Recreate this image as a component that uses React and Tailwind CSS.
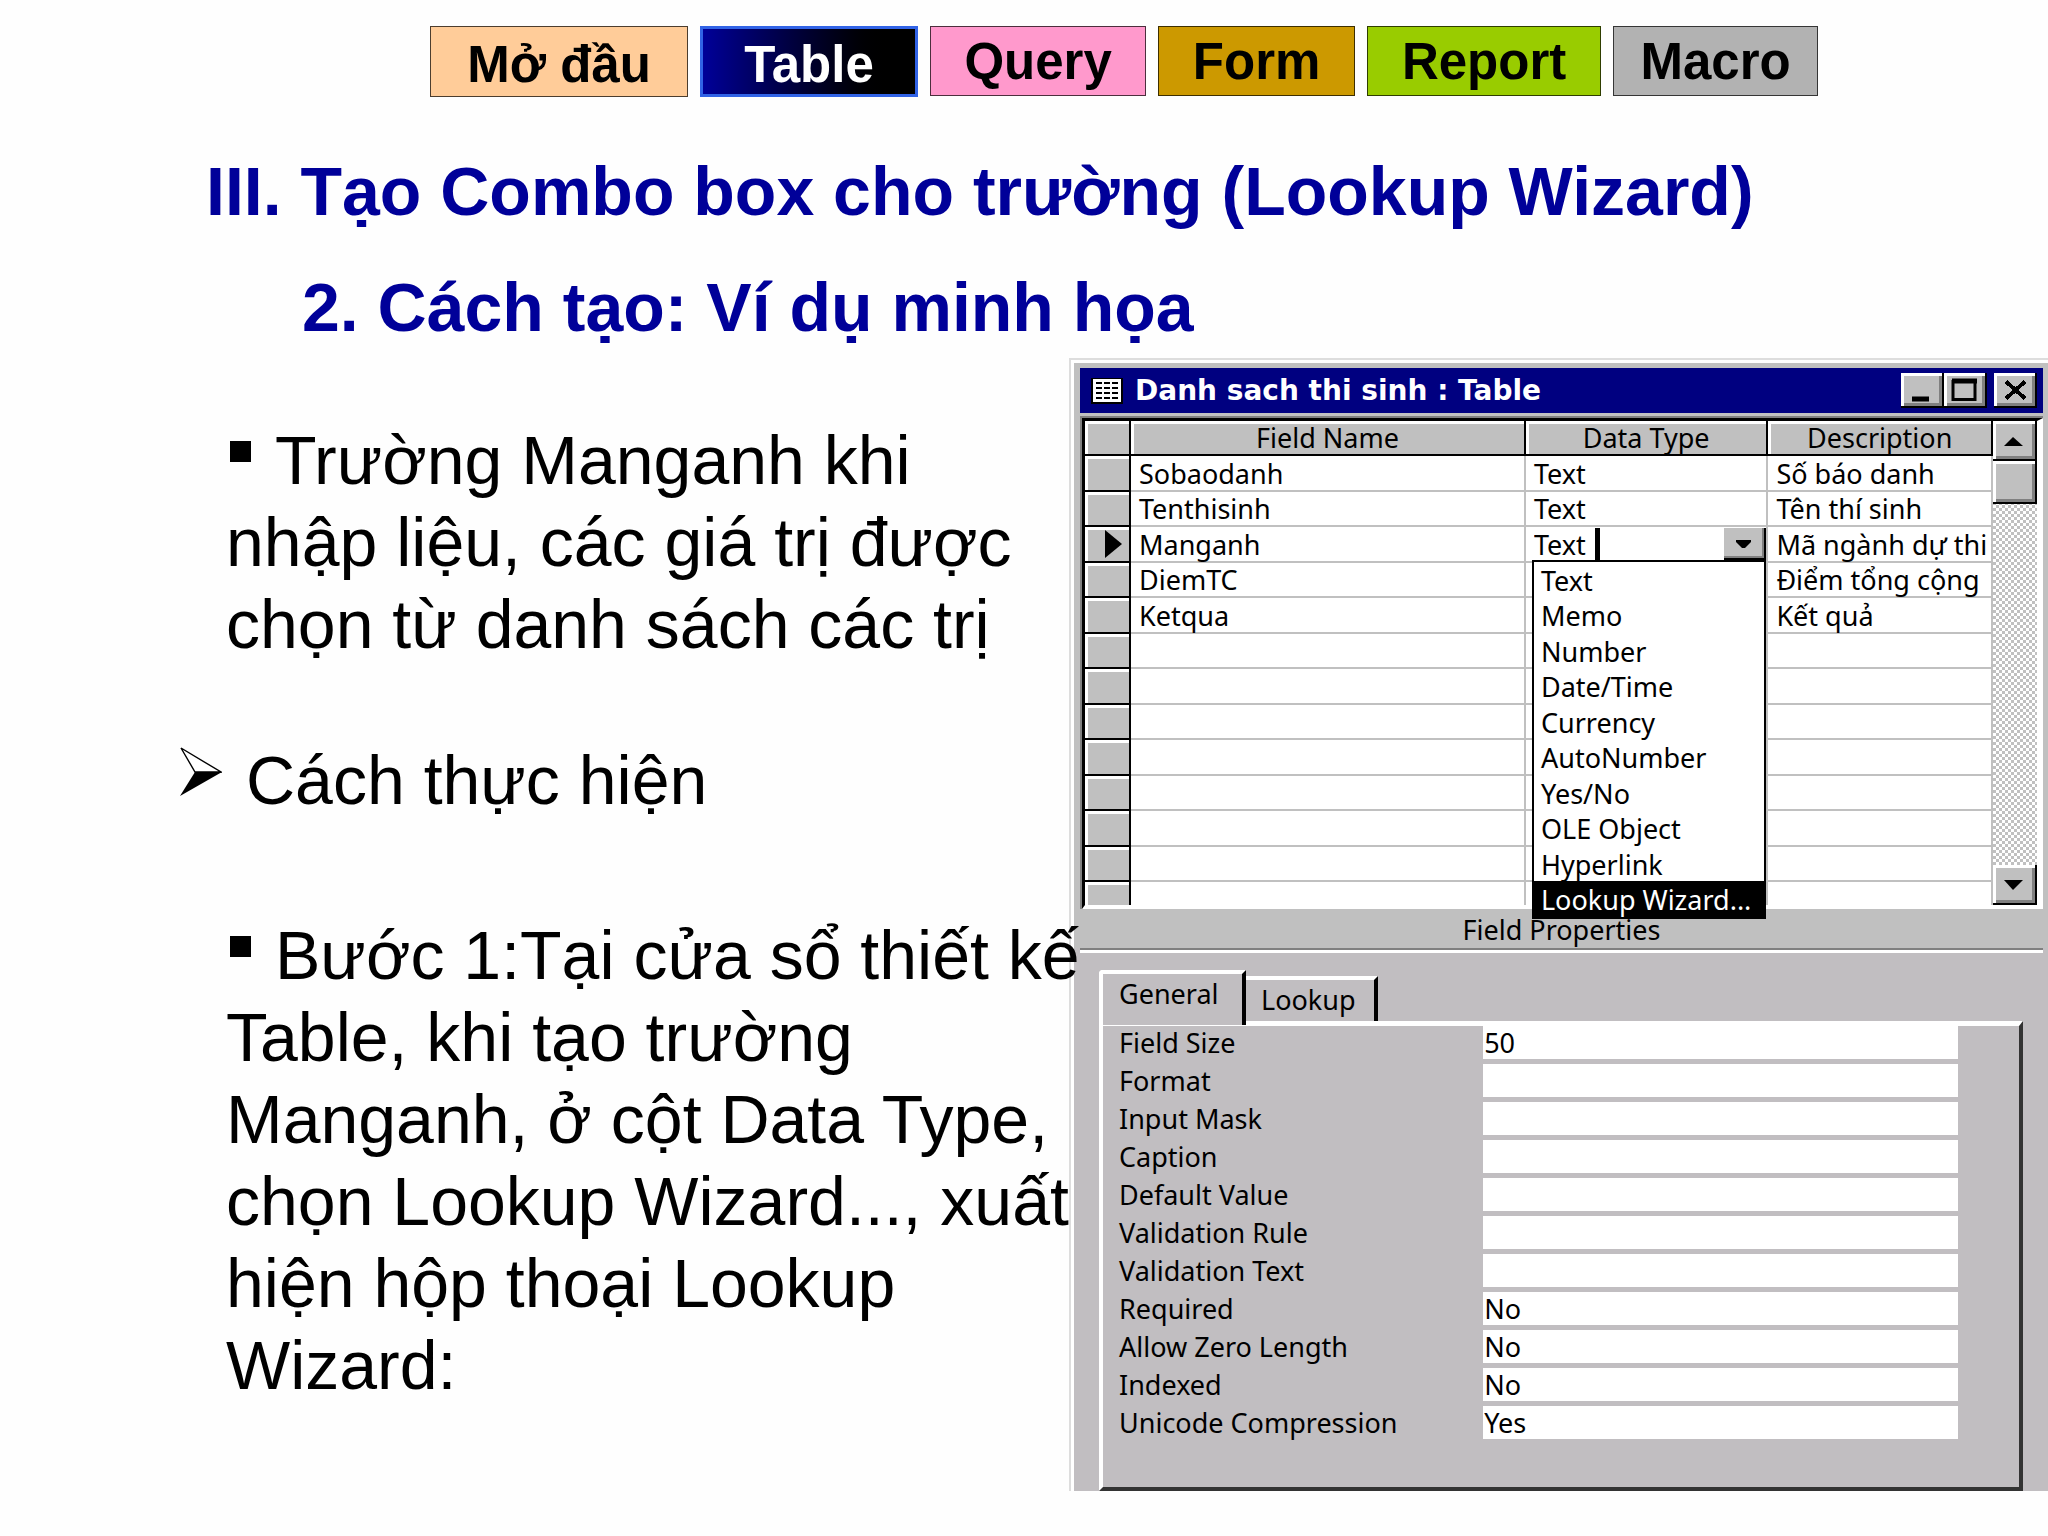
import React, { useState } from "react";

const NAV_ITEMS = [
  { label: "Mở đầu", box: "w-[258px] h-[71px] pt-1.5 border border-black/70 bg-[#ffcc99] text-black" },
  {
    label: "Table",
    box: "w-[218px] h-[71px] pt-1.5 border-[3px] border-[#3163e6] bg-linear-to-r from-[#000099] to-black to-90% text-white",
  },
  { label: "Query", box: "w-[216px] h-[70px] border border-black/70 bg-[#ff99cc] text-black" },
  { label: "Form", box: "w-[197px] h-[70px] border border-black/70 bg-[#cc9900] text-black" },
  { label: "Report", box: "w-[234px] h-[70px] border border-black/70 bg-[#99cc00] text-black" },
  { label: "Macro", box: "w-[205px] h-[70px] border border-black/70 bg-[#b2b2b2] text-black" },
];

const FIELDS = [
  { name: "Sobaodanh", type: "Text", description: "Số báo danh" },
  { name: "Tenthisinh", type: "Text", description: "Tên thí sinh" },
  { name: "Manganh", type: "Text", description: "Mã ngành dự thi", active: true },
  { name: "DiemTC", type: "", description: "Điểm tổng cộng" },
  { name: "Ketqua", type: "", description: "Kết quả" },
  ...Array.from({ length: 7 }, () => ({ name: "", type: "", description: "" })),
];

const DATA_TYPES = [
  "Text",
  "Memo",
  "Number",
  "Date/Time",
  "Currency",
  "AutoNumber",
  "Yes/No",
  "OLE Object",
  "Hyperlink",
  "Lookup Wizard...",
];

const PROPERTIES = [
  ["Field Size", "50"],
  ["Format", ""],
  ["Input Mask", ""],
  ["Caption", ""],
  ["Default Value", ""],
  ["Validation Rule", ""],
  ["Validation Text", ""],
  ["Required", "No"],
  ["Allow Zero Length", "No"],
  ["Indexed", "No"],
  ["Unicode Compression", "Yes"],
];

const RAISED =
  "bg-[#c0c0c0] shadow-[inset_-2px_-2px_0_#000,inset_3px_3px_0_#fff,inset_-5px_-5px_0_#808080]";
const SELECTOR = "border-r-2 border-b-2 border-black bg-[#c0c0c0] shadow-[inset_3px_3px_0_#fff]";
const HEAD = "border-r-2 border-b-2 border-black bg-[#c0c0c0] shadow-[inset_3px_3px_0_#fff] p-0 font-normal";
const CELL = "border-r-2 border-b-2 border-[#c0c0c0] p-0 pl-2 whitespace-nowrap";

const NavBar = () => (
  <nav className="flex items-start gap-3 pl-[21%] pt-[26px]">
    {NAV_ITEMS.map((item) => (
      <a
        key={item.label}
        href="#"
        className={`flex items-center justify-center text-[51px] leading-none font-bold ${item.box}`}
      >
        {item.label}
      </a>
    ))}
  </nav>
);

const SquareBullet = () => <span className="inline-block w-[21px] h-[21px] bg-black ml-1 mr-6 mb-[22px]" />;

const ArrowBullet = () => (
  <svg viewBox="0 0 42 50" className="mt-2 w-[42px] h-[50px]">
    <path d="M1 1 L41 25 H15 Z" fill="#fff" stroke="#000" strokeWidth="1.4" />
    <path d="M0 49 L15 25 H42 Z" fill="#000" />
  </svg>
);

const Notes = () => (
  <div className="relative z-10 min-w-0 pt-[61px] text-[68px] leading-[82px] text-black whitespace-nowrap">
    <p className="pl-[226px]">
      <SquareBullet />
      Trường Manganh khi
      <br />
      nhập liệu, các giá trị được
      <br />
      chọn từ danh sách các trị
    </p>
    <p className="mt-[74px] pl-[180px] flex gap-6">
      <ArrowBullet />
      Cách thực hiện
    </p>
    <p className="mt-[93px] pl-[226px]">
      <SquareBullet />
      Bước 1:Tại cửa sổ thiết kế
      <br />
      Table, khi tạo trường
      <br />
      Manganh, ở cột Data Type,
      <br />
      chọn Lookup Wizard..., xuất
      <br />
      hiện hộp thoại Lookup
      <br />
      Wizard:
    </p>
  </div>
);

const TableIcon = () => (
  <svg viewBox="0 0 32 26" className="w-8 h-[26px]" shapeRendering="crispEdges">
    <rect width="32" height="26" fill="#000" />
    <rect x="2" y="1" width="28" height="23" fill="#fff" />
    {[4, 9, 14, 19].map((y) =>
      [5, 13, 21].map((x) => <rect key={`${x}-${y}`} x={x} y={y} width="6" height="2" fill="#000" />)
    )}
  </svg>
);

const TitleBar = () => (
  <div className="flex items-center h-[45px] bg-[#000080] pl-[11px] pr-[6px] text-white">
    <TableIcon />
    <h3 className="ml-3 flex-1 font-['DejaVu_Sans',sans-serif] text-[28px] leading-none font-bold">
      Danh sach thi sinh : Table
    </h3>
    <button aria-label="Minimize" className={`w-[43px] h-[35px] ${RAISED}`}>
      <svg viewBox="0 0 43 34" className="w-full h-full">
        <rect x="11" y="23" width="17" height="5" fill="#000" />
      </svg>
    </button>
    <button aria-label="Maximize" className={`w-[43px] h-[35px] ${RAISED}`}>
      <svg viewBox="0 0 43 34" className="w-full h-full">
        <path d="M9 8 H31 V26 H9 Z" fill="none" stroke="#000" strokeWidth="3" />
        <rect x="8" y="5" width="25" height="5" fill="#000" />
      </svg>
    </button>
    <button aria-label="Close" className={`ml-[7px] w-[43px] h-[35px] ${RAISED}`}>
      <svg viewBox="0 0 43 34" className="w-full h-full" shapeRendering="crispEdges">
        <path d="M12 8 L31 25 M31 8 L12 25" stroke="#000" strokeWidth="4" />
      </svg>
    </button>
  </div>
);

const TypeCombo = () => {
  const [type, setType] = useState("Lookup Wizard...");
  return (
    <div className="relative flex h-[33px] items-stretch">
      <input
        aria-label="Data Type"
        defaultValue="Text"
        className="w-[66px] border-r-[5px] border-black outline-none"
      />
      <button
        aria-label="Open list"
        className="ml-auto w-[42px] border-b-[3px] border-r-2 border-black bg-[#c0c0c0] shadow-[inset_-2px_-2px_0_#808080]"
      >
        <svg viewBox="0 0 40 30" className="w-full h-full">
          <path d="M12 12 H27 V14 L21 20 H18 L12 14 Z" fill="#000" />
        </svg>
      </button>
      <select
        aria-label="Data types"
        size={10}
        value={type}
        onChange={(e) => setType(e.target.value)}
        className="absolute z-20 -left-0.5 right-0 top-8 h-[359px] overflow-hidden rounded-none border-2 border-black bg-white p-0 text-black outline-none"
      >
        {DATA_TYPES.map((t) => (
          <option
            key={t}
            value={t}
            className="h-[35px] even:h-[36px] last:h-[37px] min-h-0 p-0 pl-[7px] leading-[35px] checked:bg-[linear-gradient(#000,#000)] checked:text-white"
          >
            {t}
          </option>
        ))}
      </select>
    </div>
  );
};

const ScrollBar = () => (
  <div className="flex w-11 flex-col bg-[repeating-conic-gradient(#c0c0c0_0_25%,#fff_0_50%)] bg-[length:6px_6px]">
    <button aria-label="Scroll up" className={`h-10 ${RAISED}`}>
      <svg viewBox="0 0 44 40" className="w-full h-full">
        <path d="M11 25 L20 16 L30 25 Z" fill="#000" />
      </svg>
    </button>
    <div className={`h-[43px] ${RAISED}`} />
    <button aria-label="Scroll down" className={`mt-auto h-10 ${RAISED}`}>
      <svg viewBox="0 0 44 40" className="w-full h-full">
        <path d="M11 15 L20 25 L30 15 Z" fill="#000" />
      </svg>
    </button>
  </div>
);

const FieldGrid = () => (
  <div className="mt-[3px] border-t-2 border-l-2 border-[#808080]">
    <div className="flex border-t-[3px] border-l-[3px] border-t-black border-l-black border-r-[6px] border-r-white border-b-4 border-b-white">
      <table className="flex-1 table-fixed border-separate border-spacing-0 bg-white">
        <colgroup>
          <col className="w-[46px]" />
          <col className="w-[43.5%]" />
          <col className="w-[26.7%]" />
          <col />
        </colgroup>
        <thead>
          <tr className="h-[35px]">
            <th className={HEAD} aria-label="Row" />
            <th className={HEAD}>Field Name</th>
            <th className={HEAD}>Data Type</th>
            <th className={HEAD}>Description</th>
          </tr>
        </thead>
        <tbody>
          {FIELDS.map((field, i) => (
            <tr key={i} className="h-[36px] even:h-[35px]">
              <td className={`p-0 ${SELECTOR}`}>
                {field.active && (
                  <svg viewBox="0 0 18 28" className="ml-5 w-[18px] h-7">
                    <path d="M0 0 L17 14 L0 28 Z" fill="#000" />
                  </svg>
                )}
              </td>
              <td className={CELL}>{field.name}</td>
              <td className={CELL}>{field.active ? <TypeCombo /> : field.type}</td>
              <td className={CELL}>{field.description}</td>
            </tr>
          ))}
          <tr className="h-[23px]">
            <td className="border-r-2 border-black bg-[#c0c0c0] shadow-[inset_3px_3px_0_#fff] p-0" />
            <td className="border-r-2 border-[#c0c0c0]" />
            <td className="border-r-2 border-[#c0c0c0]" />
            <td className="border-r-2 border-[#c0c0c0]" />
          </tr>
        </tbody>
      </table>
      <ScrollBar />
    </div>
  </div>
);

const PropertySheet = () => (
  <div className="border-t-2 border-[#808080] bg-[#c1bec1]">
    <div className="border-t-[3px] border-white pt-[17px] pl-[19px] pr-5">
      <div className="relative z-10 flex items-end">
        <button className="-mb-1 h-[55px] w-[147px] rounded-tl-sm border-t-[4px] border-l-[4px] border-white border-r-4 border-r-black bg-[#c1bec1] pl-4 pb-3 text-left leading-none">
          General
        </button>
        <button className="h-[45px] w-[132px] border-t-[4px] border-white border-r-4 border-r-black bg-[#c1bec1] pl-[15px] pb-0.5 text-left leading-none">
          Lookup
        </button>
      </div>
      <div className="border-t-[5px] border-l-4 border-white border-r-4 border-r-[#333] border-b-4 border-b-[#333] pb-[48px]">
        <div className="flex flex-col gap-[5px]">
          {PROPERTIES.map(([label, value]) => (
            <label key={label} className="flex h-[33px] items-center pl-4 pr-[61px]">
              <span className="flex-1">{label}</span>
              <input
                defaultValue={value}
                className="h-[33px] w-[56.6%] bg-white pl-px outline-none"
              />
            </label>
          ))}
        </div>
      </div>
    </div>
  </div>
);

const AccessWindow = () => (
  <section className="min-w-0 border-t-2 border-l-2 border-[#dddddd] bg-white pt-[3px] pl-[3px]">
    <div className="bg-[#c0c0c0] pt-[5px] pl-[6px] pr-[5px] font-['Noto_Sans',sans-serif] text-[27px] leading-[33px] text-black">
      <TitleBar />
      <FieldGrid />
      <h4 className="pt-1 h-[39px] text-center">Field Properties</h4>
    </div>
    <div className="bg-[#c1bec1] pl-[6px] pr-[5px] font-['Noto_Sans',sans-serif] text-[27px] leading-[33px] text-black">
      <PropertySheet />
    </div>
  </section>
);

export default function App() {
  return (
    <main className="min-h-screen overflow-hidden bg-[#fefefe] font-['Liberation_Sans',Arial,sans-serif]">
      <NavBar />
      <header className="pt-[52px] text-[68px] font-bold text-[#000099]">
        <h1 className="pl-[206px] leading-[84px]">III. Tạo Combo box cho trường (Lookup Wizard)</h1>
        <h2 className="mt-8 pl-[302px] leading-[84px]">2. Cách tạo: Ví dụ minh họa</h2>
      </header>
      <div className="mt-[9px] grid grid-cols-[1069fr_979fr] items-start">
        <Notes />
        <AccessWindow />
      </div>
    </main>
  );
}
